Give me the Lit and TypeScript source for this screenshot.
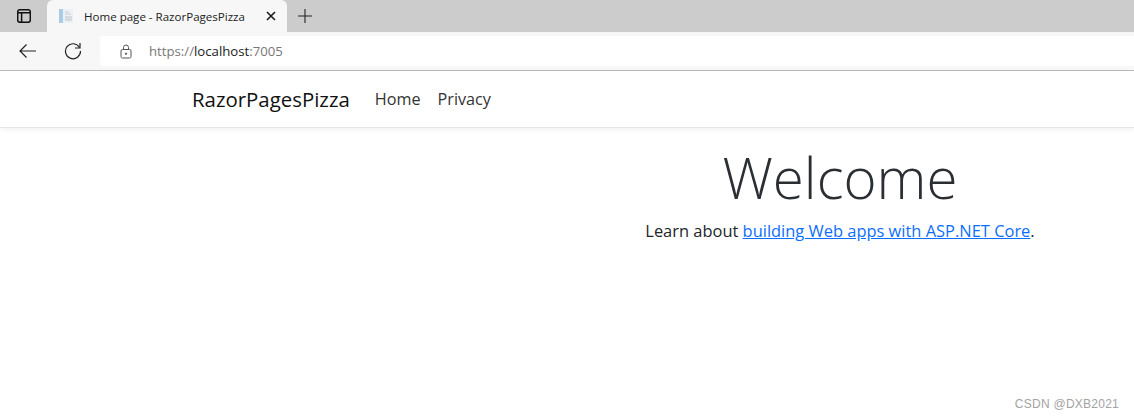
import { LitElement, html, css } from "lit";
import { customElement } from "lit/decorators.js";

@customElement("app-root")
export class AppRoot extends LitElement {
  static styles = css`
    :host { display: block; position: relative; width: 1134px; height: 418px; overflow: hidden; background: #fff; font-family: "Open Sans", "Noto Sans", sans-serif; color: #212529; }
    svg { display: block; flex: none; }
    .strip { height: 32px; background: #ccc; display: flex; align-items: flex-end; }
    .side { width: 47px; height: 32px; display: flex; align-items: center; justify-content: center; }
    .tab { width: 240px; height: 32px; box-sizing: border-box; background: #f7f7f7; border-radius: 6px 6px 0 0; display: flex; align-items: center; padding: 0 11px 0 11px; }
    .fav { margin-right: 10px; }
    .title { flex: 1; font-size: 11.55px; color: #222; white-space: nowrap; }
    .plus { width: 36px; height: 32px; display: flex; align-items: center; justify-content: center; }
    .toolbar { height: 38px; background: #f7f7f7; border-bottom: 1px solid #bbb; display: flex; align-items: center; padding-left: 18px; }
    .navbtn { width: 46px; display: flex; align-items: center; }
    .url { flex: 1; height: 30px; background: #fff; border-radius: 4px 0 0 4px; display: flex; align-items: center; padding-left: 20px; font-size: 13.2px; color: #777; margin-left: -10px; }
    .url svg { margin-right: 17px; }
    .url b { font-weight: 400; color: #222; }
    nav { height: 56px; border-bottom: 1px solid #e5e5e5; box-shadow: 0 2px 5px rgba(0,0,0,.05); display: flex; align-items: center; padding-left: 192px; box-sizing: content-box; }
    .brand { font-size: 20.4px; color: #111; margin-right: 25px; white-space: nowrap; }
    .link { font-size: 16.2px; color: #333; margin-right: 17px; white-space: nowrap; }
    main { padding: 15px 0 0 546px; text-align: center; }
    h1 { margin: 0; font-size: 56.5px; font-weight: 300; line-height: 70px; color: #2b2f33; }
    p { margin: 6px 0 0; font-size: 16.45px; line-height: 24px; }
    a { color: #0d6efd; text-decoration: underline; }
    .mark { position: absolute; right: 15px; bottom: 7px; font: 12px "Liberation Sans", sans-serif; letter-spacing: .25px; color: #a3a3a3; }
  `;

  render() {
    return html`
      <div class="strip">
        <div class="side">
          <svg width="14" height="14" viewBox="0 0 14 14" fill="none" stroke="#111" stroke-width="1.5"><rect x=".7" y=".7" width="12.6" height="12.6" rx="2.2"/><path d="M1 3.700H13M4.600 3.700V13"/></svg>
        </div>
        <div class="tab">
          <svg class="fav" width="16" height="16" viewBox="0 0 16 16"><rect x="1" y="1" width="14" height="14" fill="#eef1f4"/><rect x="1" y="1" width="4" height="14" fill="#a9cbe8"/><rect x="7" y="8" width="7" height="5" fill="#d5dbe0"/><path d="M7 4H11M7 6H13" stroke="#c9d0d6"/></svg>
          <span class="title">Home page - RazorPagesPizza</span>
          <svg width="10" height="10" viewBox="0 0 10 10" stroke="#1a1a1a" stroke-width="1.6"><path d="M1 1L9 9M9 1L1 9"/></svg>
        </div>
        <div class="plus">
          <svg width="14" height="14" viewBox="0 0 14 14" stroke="#222" stroke-width="1.1"><path d="M7 0V14M0 7H14"/></svg>
        </div>
      </div>
      <div class="toolbar">
        <div class="navbtn"><svg width="18" height="16" viewBox="1 0 18 16" fill="none" stroke="#222" stroke-width="1.2"><path d="M3 8H19M9.500 1.500L3 8L9.500 14.500"/></svg></div>
        <div class="navbtn"><svg width="18" height="18" viewBox="0 0 18 18" fill="none" stroke="#222" stroke-width="1.2"><path d="M15.500 5.500A7.500 7.500 0 1 0 16.500 9"/><path d="M16 1V6H11"/></svg></div>
        <div class="url">
          <svg width="12" height="15" viewBox="0 0 12 15" fill="none" stroke="#555" stroke-width="1"><rect x="1" y="5.500" width="10" height="8.500" rx="1.500"/><path d="M3.500 5.500V3.500A2.500 2.500 0 0 1 8.500 3.500V5.500"/><circle cx="6" cy="9.700" r=".7" fill="#555"/></svg>
          <span>https://<b>localhost</b>:7005</span>
        </div>
      </div>
      <nav>
        <span class="brand">RazorPagesPizza</span>
        <span class="link">Home</span>
        <span class="link">Privacy</span>
      </nav>
      <main>
        <h1>Welcome</h1>
        <p>Learn about <a href="#">building Web apps with ASP.NET Core</a>.</p>
      </main>
      <div class="mark">CSDN @DXB2021</div>
    `;
  }
}
